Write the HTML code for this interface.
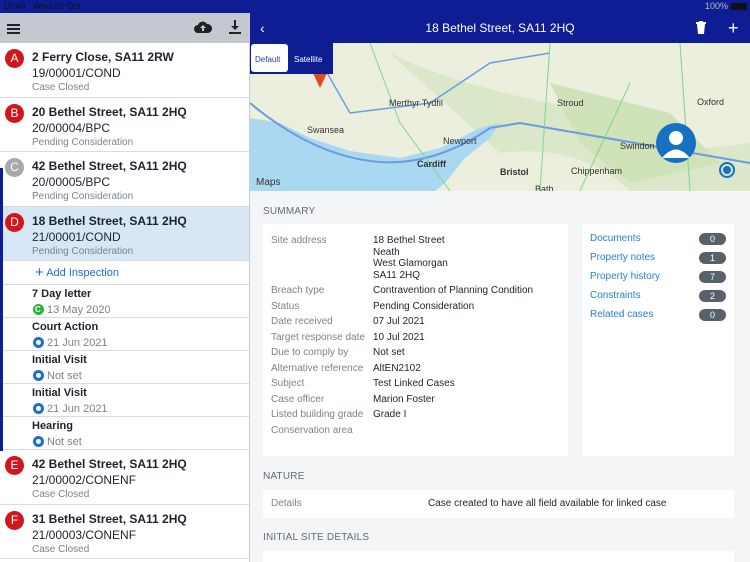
<!DOCTYPE html>
<html><head><meta charset="utf-8"><style>
*{margin:0;padding:0;box-sizing:border-box}
body{width:750px;height:562px;overflow:hidden;font-family:"Liberation Sans",Arial,sans-serif;background:#f4f5f6;position:relative}
#sb{position:absolute;left:0;top:0;width:750px;height:14px;background:#0e1d94;color:#111;font-size:9px}
#left{position:absolute;left:0;top:13px;width:250px;height:549px;background:#fff;border-right:1px solid #c8ccd2}
#lhead{height:30px;background:#c4c9cf;position:relative}
.item{position:relative;height:54.5px;border-bottom:1px solid #d8dbe0;padding-left:32px}
.item .c{position:absolute;left:5px;top:6px;width:19px;height:19px;border-radius:50%;background:#d3161e;color:#fff;font-size:12px;text-align:center;line-height:19px}
.t1{font-size:12px;font-weight:bold;color:#1d2230;padding-top:7px;line-height:14px}
.t2{font-size:12px;color:#1d2230;line-height:16px;margin-top:1px}
.t3{font-size:10px;color:#7c838c;line-height:13px}
.insp{height:33px;border-bottom:1px solid #d8dbe0;padding-left:32px;position:relative}
.insp .a{font-size:11px;font-weight:bold;color:#1d2230;padding-top:3px;line-height:13px}
.insp .b{font-size:11px;color:#7c838c;line-height:14px;margin-top:2px;position:relative;padding-left:15px}
.ic{position:absolute;left:1px;top:1px;width:11px;height:11px;border-radius:50%;background:#1a6ed1}
.ic::after{content:"";position:absolute;left:3px;top:3px;width:5px;height:5px;border-radius:50%;background:#fff}
.ic.g{background:#2bb03a}.ic.g::after{display:none}
#right{position:absolute;left:250px;top:13px;width:500px}
#rhead{height:30px;background:#0e1d94;color:#fff;font-size:12px;text-align:center;line-height:30px;position:relative}
.sec{font-size:10px;color:#626a73;letter-spacing:.2px;position:absolute;left:263px}
.card{position:absolute;background:#fff}
.row{display:flex;font-size:10px;line-height:15.5px}
.row .k{width:102px;color:#7c838c}.row .v{color:#1d2230}
.lnk{font-size:10px;color:#2a7fd0;position:absolute;left:590px}
.pill{position:absolute;left:699px;width:27px;height:12px;border-radius:6px;background:#58606a;color:#fff;font-size:9px;text-align:center;line-height:12px}
</style></head><body>
<div id="sb"><span style="position:absolute;left:3px;top:1px">10:49&nbsp;&nbsp; Wed 20 Oct</span><span style="position:absolute;right:22px;top:1px;color:#bbb">100%</span><span style="position:absolute;right:3px;top:3px;width:16px;height:7px;background:#111"></span></div>
<div style="position:absolute;left:0;top:168px;width:3px;height:283px;background:#0e1d94;z-index:3"></div>
<div id="left">
 <div id="lhead">
  <div style="position:absolute;left:7px;top:11px;width:13px;height:2px;background:#222;box-shadow:0 4px #222,0 8px #222"></div>
  <svg style="position:absolute;left:194px;top:8px" width="18" height="13" viewBox="0 0 18 13"><path d="M4 12a4 4 0 0 1 0-8a5 5 0 0 1 9-1a4 4 0 0 1 1 9z" fill="#222"/><path d="M9 4l-3 3h2v3h2V7h2z" fill="#c4c9cf"/></svg>
  <svg style="position:absolute;left:229px;top:7px" width="12" height="14" viewBox="0 0 12 14"><path d="M5 0h2v6h3l-4 4l-4-4h3z M0 12h12v2H0z" fill="#222"/></svg>
 </div>
 <div class="item"><div class="c">A</div><div class="t1">2 Ferry Close, SA11 2RW</div><div class="t2">19/00001/COND</div><div class="t3">Case Closed</div></div>
 <div class="item"><div class="c">B</div><div class="t1">20 Bethel Street, SA11 2HQ</div><div class="t2">20/00004/BPC</div><div class="t3">Pending Consideration</div></div>
 <div class="item"><div class="c" style="background:#a9a9a9">C</div><div class="t1">42 Bethel Street, SA11 2HQ</div><div class="t2">20/00005/BPC</div><div class="t3">Pending Consideration</div></div>
 <div class="item" style="background:#d8e7f6"><div class="c">D</div><div class="t1">18 Bethel Street, SA11 2HQ</div><div class="t2">21/00001/COND</div><div class="t3">Pending Consideration</div></div>
 <div style="height:24px;border-bottom:1px solid #d8dbe0;padding-left:35px;font-size:11px;color:#1a6ed1;line-height:23px"><span style="font-size:15px;vertical-align:-1px">+</span> Add Inspection</div>
 <div class="insp"><div class="a">7 Day letter</div><div class="b"><span class="ic g"></span><span style="position:absolute;left:3px;top:0;font-size:8px;color:#fff;font-weight:bold">C</span>13 May 2020</div></div>
 <div class="insp"><div class="a">Court Action</div><div class="b"><span class="ic"></span>21 Jun 2021</div></div>
 <div class="insp"><div class="a">Initial Visit</div><div class="b"><span class="ic"></span>Not set</div></div>
 <div class="insp"><div class="a">Initial Visit</div><div class="b"><span class="ic"></span>21 Jun 2021</div></div>
 <div class="insp"><div class="a">Hearing</div><div class="b"><span class="ic"></span>Not set</div></div>
 <div class="item"><div class="c">E</div><div class="t1">42 Bethel Street, SA11 2HQ</div><div class="t2">21/00002/CONENF</div><div class="t3">Case Closed</div></div>
 <div class="item"><div class="c">F</div><div class="t1">31 Bethel Street, SA11 2HQ</div><div class="t2">21/00003/CONENF</div><div class="t3">Case Closed</div></div>
</div>
<div id="right">
 <div id="rhead"><span style="position:absolute;left:10px;font-size:14px">&#8249;</span>18 Bethel Street, SA11 2HQ
  <svg style="position:absolute;left:446px;top:8px" width="10" height="13" viewBox="0 0 10 13"><path d="M0 1h10v2H0zM3 0h4v1H3zM1 3h8l-1 10H2z" fill="#fff"/></svg>
  <span style="position:absolute;left:478px;top:0;font-size:18px">+</span></div>
 <svg width="500" height="148" viewBox="0 0 500 148" style="display:block">
  <rect width="500" height="148" fill="#eceede"/>
  <path d="M140 10 Q200 40 300 60 L420 110 L500 100 L500 148 L380 148 Q330 100 250 110 Z" fill="#d6e5c2" opacity=".8"/>
  <path d="M300 40 L420 70 L470 120 L380 140 L330 100Z" fill="#cfe2b8"/>
  <path d="M0 75 L30 80 L60 95 L100 108 L150 115 L190 105 L230 85 L250 80 L240 95 L215 115 L195 140 L185 148 L0 148 Z" fill="#a9d8f0"/>
  <path d="M0 60 Q60 110 120 118 T240 85 L270 80 L500 120" stroke="#6a9de0" stroke-width="2" fill="none"/>
  <path d="M60 0 L100 70 L180 60 L240 20 L300 10" stroke="#6a9de0" stroke-width="1.5" fill="none"/>
  <path d="M120 0 L150 80 L200 148 M300 0 L290 148 M380 40 L330 148 M430 0 L440 148" stroke="#7ed68a" stroke-width="1" fill="none"/>
  <g font-size="9" fill="#333" font-family="Liberation Sans"><text x="57" y="90">Swansea</text><text x="167" y="124" font-weight="bold">Cardiff</text><text x="193" y="101">Newport</text><text x="250" y="132" font-weight="bold">Bristol</text><text x="307" y="63">Stroud</text><text x="370" y="106">Swindon</text><text x="447" y="62">Oxford</text><text x="139" y="63">Merthyr Tydfil</text><text x="321" y="131">Chippenham</text><text x="285" y="149">Bath</text><text x="6" y="142" font-size="10">Maps</text></g>
  <path d="M62 28 L78 28 L70 45Z" fill="#e04a1e"/>
  <circle cx="426" cy="100" r="20" fill="#1670c4"/><circle cx="426" cy="95" r="7" fill="#fff"/><path d="M412 115 Q426 98 440 115Z" fill="#fff"/>
  <circle cx="477" cy="127" r="7" fill="none" stroke="#1670c4" stroke-width="2"/><circle cx="477" cy="127" r="4" fill="#1670c4"/>
  <rect x="0" y="0" width="83" height="31" fill="#0e1d94"/><rect x="1" y="1" width="37" height="28" rx="3" fill="#fff"/>
  <text x="5" y="19" font-size="8" fill="#2a3a9a" font-family="Liberation Sans">Default</text><text x="44" y="19" font-size="8" fill="#fff" font-family="Liberation Sans">Satellite</text>
 </svg>
</div>
<div class="sec" style="top:206px">SUMMARY</div>
<div class="card" style="left:263px;top:224px;width:305px;height:232px;padding:9px 0 0 8px">
 <div class="row"><div class="k">Site address</div><div class="v" style="line-height:11.5px;padding-top:2px;padding-bottom:2px">18 Bethel Street<br>Neath<br>West Glamorgan<br>SA11 2HQ</div></div>
 <div class="row"><div class="k">Breach type</div><div class="v">Contravention of Planning Condition</div></div>
 <div class="row"><div class="k">Status</div><div class="v">Pending Consideration</div></div>
 <div class="row"><div class="k">Date received</div><div class="v">07 Jul 2021</div></div>
 <div class="row"><div class="k">Target response date</div><div class="v">10 Jul 2021</div></div>
 <div class="row"><div class="k">Due to comply by</div><div class="v">Not set</div></div>
 <div class="row"><div class="k">Alternative reference</div><div class="v">AltEN2102</div></div>
 <div class="row"><div class="k">Subject</div><div class="v">Test Linked Cases</div></div>
 <div class="row"><div class="k">Case officer</div><div class="v">Marion Foster</div></div>
 <div class="row"><div class="k">Listed building grade</div><div class="v">Grade I</div></div>
 <div class="row"><div class="k">Conservation area</div><div class="v"></div></div>
</div>
<div class="card" style="left:582px;top:224px;width:152px;height:232px"></div>
<div class="lnk" style="top:233px">Documents</div><div class="pill" style="top:233px">0</div>
<div class="lnk" style="top:252px">Property notes</div><div class="pill" style="top:252px">1</div>
<div class="lnk" style="top:271px">Property history</div><div class="pill" style="top:271px">7</div>
<div class="lnk" style="top:290px">Constraints</div><div class="pill" style="top:290px">2</div>
<div class="lnk" style="top:309px">Related cases</div><div class="pill" style="top:309px">0</div>
<div class="sec" style="top:471px">NATURE</div>
<div class="card" style="left:263px;top:490px;width:471px;height:28px;font-size:10px;line-height:28px"><span style="position:absolute;left:8px;color:#7c838c">Details</span><span style="position:absolute;left:165px;color:#1d2230">Case created to have all field available for linked case</span></div>
<div class="sec" style="top:532px">INITIAL SITE DETAILS</div>
<div class="card" style="left:263px;top:551px;width:471px;height:11px"></div>
</body></html>
